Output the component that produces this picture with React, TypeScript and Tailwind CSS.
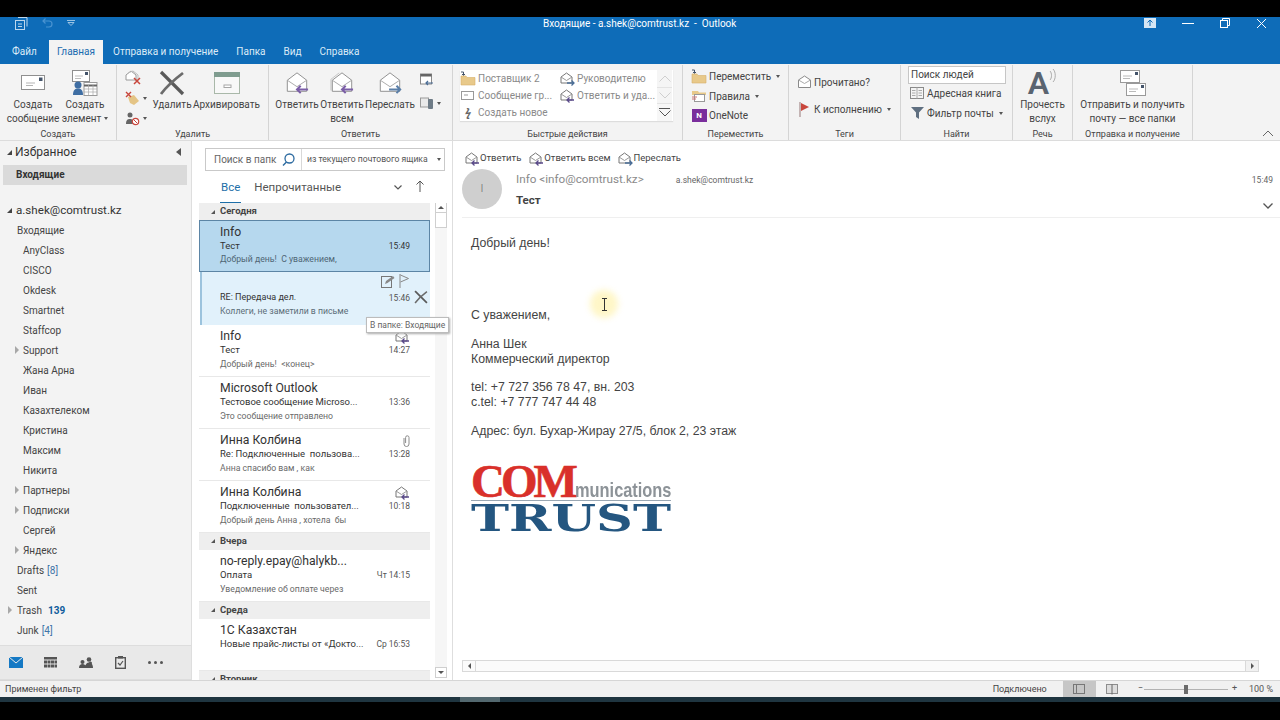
import { ReactNode } from "react";

// ---- small icons ----
function OpenEnv({ arrow, stack, size = 24 }: { arrow?: "left" | "right"; stack?: boolean; size?: number }) {
  const c = arrow === "right" ? "#5b7fa8" : "#7b5ea7";
  return (
    <svg width={size} height={size} viewBox="0 0 26 26" fill="none">
      {stack && <path d="M1 21V9l9-7" stroke="#c4c4c4" />}
      <path d="M2.5 10 13 2l10.5 8v12h-21z" fill="#fff" stroke="#8a8a8a" />
      <path d="M2.5 10 13 17l10.5-7" stroke="#a5a5a5" />
      {arrow === "left" && <path d="M25 20H13m4-4-4 4 4 4" stroke={c} strokeWidth="2.2" />}
      {arrow === "right" && <path d="M12 20h12m-4-4 4 4-4 4" stroke={c} strokeWidth="2.2" />}
    </svg>
  );
}

function SmallReply({ forward }: { forward?: boolean }) {
  return (
    <svg width="15" height="14" viewBox="0 0 15 14" fill="none">
      <path d="M1 5 6.5 1 12 5v6H1z" fill="#fff" stroke="#777" />
      <path d="M1 5l5.5 3.5L12 5" stroke="#999" />
      {forward ? (
        <path d="M7 11h7m-2.5-2.5L14 11l-2.500 2.500" stroke="#4a6d96" strokeWidth="1.300" />
      ) : (
        <path d="M14 11H7m2.500-2.500L7 11l2.500 2.500" stroke="#5a4a8a" strokeWidth="1.300" />
      )}
    </svg>
  );
}

function MailLines({ w = 24, h = 15 }: { w?: number; h?: number }) {
  return (
    <svg width={w} height={h} viewBox="0 0 24 15" fill="none">
      <rect x=".5" y=".5" width="23" height="14" fill="#fff" stroke="#8f8f8f" />
      <rect x="18" y="2.500" width="3.500" height="3.500" fill="#44546a" />
      <path d="M5 8h9M5 10.500h7" stroke="#b5b5b5" />
    </svg>
  );
}

function BigX({ size = 26 }: { size?: number }) {
  return (
    <svg width={size} height={size} viewBox="0 0 26 26" fill="none">
      <path d="M2 2c6 6 14 14 22 22" stroke="#595959" strokeWidth="3.200" />
      <path d="M24 3C16 9 8 16 2 24" stroke="#6b6b6b" strokeWidth="2.800" />
    </svg>
  );
}

function Caret() {
  return <span className="ml-[3px] inline-block align-middle w-0 h-0 border-x-[2px] border-x-transparent border-t-[3px] border-t-[#555]" />;
}

function FolderIco({ arrow = true }: { arrow?: boolean }) {
  return (
    <svg width="16" height="15" viewBox="0 0 16 15" fill="none">
      {arrow && <path d="M1 1h2.500v3M2 3l1.500 1.500L5 3" stroke="#44546a" />}
      <path d="M1 5h5l1 1.500h8V14H1z" fill="#e8c98a" stroke="#d6b06a" strokeWidth=".6" />
    </svg>
  );
}

// ---- ribbon pieces ----
function RibbonGroup({ label, width, children }: { label: string; width: string; children: ReactNode }) {
  return (
    <div className={`${width} shrink-0 flex flex-col border-r border-[#d4d4d4] mt-[1px]`}>
      <div className="flex-1 flex min-h-0">{children}</div>
      <div className="h-[12px] text-center text-[9px] leading-[12px] text-[#444]">{label}</div>
    </div>
  );
}

function BigBtn({ icon, lines, width, caret }: { icon: ReactNode; lines: string[]; width: string; caret?: boolean }) {
  return (
    <div className={`${width} shrink-0 flex flex-col items-center`}>
      <div className="h-[29px] shrink-0 mt-[3px] flex items-center justify-center">{icon}</div>
      <div className="text-center text-[10px] leading-[13.500px] text-[#444] mt-[1px] whitespace-nowrap">
        {lines.map((l, i) => (
          <div key={l}>
            {l}
            {caret && i === lines.length - 1 && <Caret />}
          </div>
        ))}
      </div>
    </div>
  );
}

function RowBtn({ icon, text, caret, h = "h-[19.500px]" }: { icon: ReactNode; text: string; caret?: boolean; h?: string }) {
  return (
    <div className={`${h} flex items-center gap-[2px] text-[10px] text-[#444] whitespace-nowrap`}>
      <span className="w-[16px] flex justify-center">{icon}</span>
      <span>{text}</span>
      {caret && <Caret />}
    </div>
  );
}

function Ribbon() {
  return (
    <div className="h-[77px] shrink-0 bg-[#f3f3f3] border-b border-[#dcdcdc] flex">
      <RibbonGroup label="Создать" width="w-[117px]">
        <div className="flex pl-[7px]">
          <BigBtn
            width="w-[52px]"
            icon={<MailLines />}
            lines={["Создать", "сообщение"]}
          />
          <BigBtn
            width="w-[52px]"
            caret
            icon={
              <svg width="26" height="26" viewBox="0 0 26 26" fill="none">
                <rect x=".5" y=".5" width="17" height="11" fill="#fff" stroke="#8f8f8f" />
                <rect x="13" y="2" width="3" height="3" fill="#44546a" />
                <path d="M3 6h8M3 8.500h6" stroke="#bbb" />
                <circle cx="6" cy="15" r="3.500" fill="#3f6ea3" />
                <path d="M1 25c0-5 2-6.500 5-6.500s5 1.500 5 6.500z" fill="#3f6ea3" />
                <rect x="12" y="12.500" width="13" height="13" fill="#fff" stroke="#9a9a9a" />
                <path d="M12 15.500h13" stroke="#666" strokeWidth="2" />
                <path d="M12 19h13M12 22h13M16.500 15v10M21 15v10" stroke="#aaa" strokeWidth=".7" />
              </svg>
            }
            lines={["Создать", "элемент"]}
          />
        </div>
      </RibbonGroup>

      <RibbonGroup label="Удалить" width="w-[152px]">
        <div className="flex pl-[8px] pt-[3px]">
          <div className="w-[26px] shrink-0 flex flex-col">
            <div className="h-[20px] flex items-center">
              <svg width="16" height="16" viewBox="0 0 16 16" fill="none">
                <path d="M1 5l5-4 5 4v5H1z" fill="#fff" stroke="#999" />
                <path d="M3 3l5-2 5 4v5" stroke="#bbb" />
                <path d="M9 8l6 6m0-6-6 6" stroke="#c8463c" strokeWidth="1.500" />
              </svg>
            </div>
            <div className="h-[20px] flex items-center">
              <svg width="15" height="15" viewBox="0 0 15 15" fill="none">
                <path d="M3 6l6-2 5 6-5 4-4-2z" fill="#e4c485" />
                <path d="M1 1l5 5m0-5-5 5" stroke="#c8463c" strokeWidth="1.400" />
              </svg>
              <Caret />
            </div>
            <div className="h-[20px] flex items-center">
              <svg width="15" height="15" viewBox="0 0 15 15" fill="none">
                <circle cx="5" cy="4" r="2.500" fill="#666" />
                <path d="M1 13c0-4 1.500-5 4-5s3 1 3 5z" fill="#666" />
                <circle cx="10.500" cy="10.500" r="3.200" stroke="#c8463c" strokeWidth="1.200" fill="#fff" />
                <path d="M8.500 8.500l4 4" stroke="#c8463c" />
              </svg>
              <Caret />
            </div>
          </div>
          <div className="-mt-[3px] flex">
            <BigBtn width="w-[42px]" icon={<BigX />} lines={["Удалить"]} />
            <BigBtn
              width="w-[67px]"
              icon={
                <svg width="26" height="22" viewBox="0 0 26 22" fill="none">
                  <rect x=".5" y=".5" width="25" height="21" fill="#f8f8f8" stroke="#a9b8a9" />
                  <rect x="0" y="0" width="26" height="5" fill="#7f9c8f" />
                  <rect x="10" y="13" width="7" height="2.500" fill="#fff" stroke="#a6a6a6" />
                </svg>
              }
              lines={["Архивировать"]}
            />
          </div>
        </div>
      </RibbonGroup>

      <RibbonGroup label="Ответить" width="w-[184px]">
        <div className="flex pl-[5px]">
          <BigBtn width="w-[46px]" icon={<OpenEnv arrow="left" />} lines={["Ответить"]} />
          <BigBtn width="w-[44px]" icon={<OpenEnv arrow="left" stack />} lines={["Ответить", "всем"]} />
          <BigBtn width="w-[52px]" icon={<OpenEnv arrow="right" />} lines={["Переслать"]} />
          <div className="flex flex-col pl-[4px] pt-[8px] gap-[9px]">
            <svg width="14" height="14" viewBox="0 0 14 14" fill="none">
              <rect x=".5" y="1" width="11" height="10" fill="#fff" stroke="#888" />
              <rect x=".5" y="1" width="11" height="2.500" fill="#666" />
              <path d="M13 10H6m2-2-2 2 2 2" stroke="#4a6d96" strokeWidth="1.200" />
            </svg>
            <div className="flex items-center">
              <svg width="14" height="14" viewBox="0 0 14 14" fill="none">
                <rect x=".5" y="2" width="8" height="9" fill="#e9e9e9" stroke="#999" />
                <rect x="8" y="3" width="5" height="10" rx="1" fill="#6e7b86" />
              </svg>
              <Caret />
            </div>
          </div>
        </div>
      </RibbonGroup>

      <RibbonGroup label="Быстрые действия" width="w-[230px]">
        <div className="ml-[7px] mt-[5px] w-[213px] h-[51px] bg-white flex text-[10px] text-[#8a8a8a] shadow-[0_1px_1px_#ddd]">
          <div className="flex-1 grid grid-cols-[100px_1fr] grid-rows-3 items-center whitespace-nowrap">
            <div className="flex items-center gap-[2px]"><FolderIco /><span>Поставщик 2</span></div>
            <div className="flex items-center gap-[2px]"><SmallReply forward /><span>Руководителю</span></div>
            <div className="flex items-center gap-[2px]">
              <svg width="16" height="12" viewBox="0 0 16 12" fill="none"><rect x="1.500" y="1.500" width="12" height="8" fill="#fff" stroke="#999" /><path d="M4 5h4" stroke="#999" /></svg>
              <span>Сообщение гр...</span>
            </div>
            <div className="flex items-center gap-[2px]"><SmallReply /><span>Ответить и уда...</span></div>
            <div className="flex items-center gap-[2px]">
              <span className="w-[16px] text-center text-[11px] leading-none text-[#666] italic font-bold">ϟ</span>
              <span>Создать новое</span>
            </div>
          </div>
          <div className="w-[15px] shrink-0 flex flex-col mr-[1px]">
            <div className="h-[17px] flex items-center justify-center bg-[#f5f5f5]">
              <svg width="12" height="7" viewBox="0 0 12 7" fill="none"><path d="M.500 6.500 6 1l5.500 5.500" stroke="#cfcfcf" /></svg>
            </div>
            <div className="h-[17px] flex items-center justify-center bg-[#f5f5f5] border-y border-[#e3e3e3]">
              <svg width="12" height="7" viewBox="0 0 12 7" fill="none"><path d="M.500.500 6 6 11.500.500" stroke="#cfcfcf" /></svg>
            </div>
            <div className="h-[17px] flex flex-col items-center justify-center bg-[#f7f7f7]">
              <div className="w-[11px] h-px bg-[#555] mb-[1px]" />
              <svg width="12" height="7" viewBox="0 0 12 7" fill="none"><path d="M.500.500 6 6 11.500.500" stroke="#555" /></svg>
            </div>
          </div>
        </div>
      </RibbonGroup>

      <RibbonGroup label="Переместить" width="w-[106px]">
        <div className="pl-[8px] pt-[2px] flex flex-col">
          <RowBtn icon={<FolderIco />} text="Переместить" caret />
          <RowBtn
            icon={
              <svg width="16" height="14" viewBox="0 0 16 14" fill="none">
                <path d="M1 2h6l1 1.500h7V6H1z" fill="#e8c98a" />
                <rect x="3.500" y="5.500" width="10" height="7" fill="#fff" stroke="#999" />
                <path d="M1 8h5M1 10h4" stroke="#c77" />
              </svg>
            }
            text="Правила"
            caret
          />
          <RowBtn
            icon={
              <span className="w-[15px] h-[13px] bg-[#7a2e9c] flex items-center justify-center text-[8px] leading-none font-bold text-white">N</span>
            }
            text="OneNote"
          />
        </div>
      </RibbonGroup>

      <RibbonGroup label="Теги" width="w-[112px]">
        <div className="pl-[7px] pt-[7px] flex flex-col gap-[7px]">
          <RowBtn
            h="h-[20px]"
            icon={
              <svg width="15" height="14" viewBox="0 0 15 14" fill="none">
                <path d="M1.500 5 7.500 1l6 4v7.500h-12z" fill="#fff" stroke="#8a8a8a" />
                <path d="M1.500 5l6 3.500 6-3.500" stroke="#aaa" />
              </svg>
            }
            text="Прочитано?"
          />
          <RowBtn
            h="h-[20px]"
            icon={
              <svg width="12" height="15" viewBox="0 0 12 15" fill="none">
                <path d="M2 0v15" stroke="#a58b8b" strokeWidth="1.200" />
                <path d="M3 1l8 4-8 4z" fill="#c8463c" />
              </svg>
            }
            text="К исполнению"
            caret
          />
        </div>
      </RibbonGroup>

      <RibbonGroup label="Найти" width="w-[112px]">
        <div className="pl-[7px] flex flex-col">
          <div className="w-[98px] h-[18px] mt-[1px] bg-white border border-[#c6c6c6] px-[2px] text-[10px] leading-[16px] text-[#444]">Поиск людей</div>
          <div className="-mt-[1px] flex flex-col pl-[1px]">
            <RowBtn
              h="h-[20px]"
              icon={
                <svg width="14" height="12" viewBox="0 0 14 12" fill="none">
                  <rect x=".500" y=".500" width="13" height="11" fill="#f4f4f4" stroke="#8a8a8a" />
                  <path d="M7 .5v11M2 3.500h3.500M2 6h3.500M2 8.500h3.500M8.500 3.500H12M8.500 6H12M8.500 8.500H12" stroke="#aaa" />
                </svg>
              }
              text="Адресная книга"
            />
            <RowBtn
              h="h-[20px]"
              icon={
                <svg width="13" height="12" viewBox="0 0 13 12" fill="none">
                  <path d="M0 0h13L8 5.500V12L5 10V5.500z" fill="#5f6f80" />
                </svg>
              }
              text="Фильтр почты"
              caret
            />
          </div>
        </div>
      </RibbonGroup>

      <RibbonGroup label="Речь" width="w-[60px]">
        <BigBtn
          width="w-[59px]"
          icon={
            <div className="flex items-start">
              <span className="text-[32px] leading-[28px] text-[#5a6470] font-semibold">A</span>
              <svg width="8" height="16" viewBox="0 0 8 16" fill="none"><path d="M1 2c2 2 2 7 0 9M4 0c3 3 3 10 0 13" stroke="#999" strokeWidth=".8" /></svg>
            </div>
          }
          lines={["Прочесть", "вслух"]}
        />
      </RibbonGroup>

      <RibbonGroup label="Отправка и получение" width="w-[120px]">
        <BigBtn
          width="w-[119px]"
          icon={
            <svg width="26" height="26" viewBox="0 0 26 26" fill="none">
              <rect x=".5" y=".5" width="19" height="12" fill="#fff" stroke="#999" />
              <rect x="15" y="2" width="3" height="3" fill="#44546a" />
              <path d="M3 6h9M3 8.500h7" stroke="#bbb" />
              <rect x="6.500" y="13.500" width="19" height="12" fill="#fff" stroke="#999" />
              <rect x="21" y="15" width="3" height="3" fill="#44546a" />
              <path d="M9 19h9M9 21.500h7" stroke="#bbb" />
            </svg>
          }
          lines={["Отправить и получить", "почту — все папки"]}
        />
      </RibbonGroup>

      <div className="flex-1 flex items-end justify-end pr-[6px] pb-[3px]">
        <svg width="12" height="7" viewBox="0 0 12 7" fill="none"><path d="M1 6l5-5 5 5" stroke="#666" /></svg>
      </div>
    </div>
  );
}

// ---- folder pane ----
type Folder = { name: string; indent: "sub" | "top"; arrow?: boolean; count?: string; unread?: string };

const folders: Folder[] = [
  { name: "Входящие", indent: "top" },
  { name: "AnyClass", indent: "sub" },
  { name: "CISCO", indent: "sub" },
  { name: "Okdesk", indent: "sub" },
  { name: "Smartnet", indent: "sub" },
  { name: "Staffcop", indent: "sub" },
  { name: "Support", indent: "sub", arrow: true },
  { name: "Жана Арна", indent: "sub" },
  { name: "Иван", indent: "sub" },
  { name: "Казахтелеком", indent: "sub" },
  { name: "Кристина", indent: "sub" },
  { name: "Максим", indent: "sub" },
  { name: "Никита", indent: "sub" },
  { name: "Партнеры", indent: "sub", arrow: true },
  { name: "Подписки", indent: "sub", arrow: true },
  { name: "Сергей", indent: "sub" },
  { name: "Яндекс", indent: "sub", arrow: true },
  { name: "Drafts", indent: "top", count: "[8]" },
  { name: "Sent", indent: "top" },
  { name: "Trash", indent: "top", arrow: true, unread: "139" },
  { name: "Junk", indent: "top", count: "[4]" },
];

function FolderRow({ f }: { f: Folder }) {
  return (
    <div className={`h-[20px] flex items-center text-[10px] text-[#444] relative ${f.indent === "sub" ? "pl-[23px]" : "pl-[17px]"}`}>
      {f.arrow && (
        <span
          className={`absolute top-[6px] w-0 h-0 border-y-[4px] border-y-transparent border-l-[4px] border-l-[#a8a8a8] ${f.indent === "sub" ? "left-[15px]" : "left-[8px]"}`}
        />
      )}
      <span>{f.name}</span>
      {f.count && <span className="ml-[3px] text-[#3f74a8]">{f.count}</span>}
      {f.unread && <span className="ml-[6px] font-bold text-[#0f5c9c]">{f.unread}</span>}
    </div>
  );
}

function FolderPane() {
  return (
    <div className="w-[192px] shrink-0 bg-[#f3f3f3] border-r border-[#dedede] flex flex-col">
      <div className="h-[22px] flex items-center pl-[7px] pr-[9px] text-[12px] text-[#333]">
        <span className="w-0 h-0 border-t-[5px] border-t-transparent border-r-[5px] border-r-[#444] mr-[3px]" />
        <span>Избранное</span>
        <svg className="ml-auto" width="6" height="8" viewBox="0 0 6 8"><path d="M5 0v8L0 4z" fill="#555" /></svg>
      </div>
      <div className="mt-[2px] ml-[3px] mr-[4px] h-[20px] bg-[#dadada] pl-[13px] pb-[1px] flex items-center text-[10px] font-bold text-[#333]">Входящие</div>
      <div className="mt-[16px] h-[19px] flex items-center pl-[7px] text-[11.600px] text-[#333]">
        <span className="w-0 h-0 border-t-[5px] border-t-transparent border-r-[5px] border-r-[#444] mr-[4px]" />
        <span>a.shek@comtrust.kz</span>
      </div>
      <div className="flex-1 min-h-0">
        {folders.map((f) => (
          <FolderRow key={f.name} f={f} />
        ))}
      </div>
      <div className="h-[35px] shrink-0 bg-[#e9e9e9] border-y border-[#dddddd] flex items-center pl-[6px] gap-[16px]">
        <span className="w-[19px] flex justify-center">
          <svg width="14" height="11" viewBox="0 0 14 11"><rect width="14" height="11" fill="#1579c4" /><path d="M0 0l7 6 7-6" stroke="#e9e9e9" fill="none" /></svg>
        </span>
        <span className="w-[19px] flex justify-center">
          <svg width="13" height="11" viewBox="0 0 13 11" fill="#555"><rect width="13" height="2.500" /><path d="M0 3.500h3v3H0zM3.500 3.500h3v3h-3zM7 3.500h3v3H7zM10.500 3.500h2.500v3h-2.500zM0 7.500h3v3H0zM3.500 7.500h3v3h-3zM7 7.500h3v3H7zM10.500 7.500h2.500v3h-2.500z" /></svg>
        </span>
        <span className="w-[19px] flex justify-center">
          <svg width="14" height="11" viewBox="0 0 14 11" fill="#555"><circle cx="3.500" cy="5" r="2" /><circle cx="10" cy="2.500" r="2.300" /><circle cx="11.500" cy="6" r="1.500" /><path d="M0 11c0-3 1.500-4 3.500-4S7 8 7 11zM6 11c.3-4 2-5.500 4-5.500s4 1.500 4 5.500z" /></svg>
        </span>
        <span className="w-[19px] flex justify-center">
          <svg width="11" height="13" viewBox="0 0 11 13" fill="none"><rect x=".700" y="1.700" width="9.600" height="10.600" stroke="#555" strokeWidth="1.400" /><rect x="3" y="0" width="5" height="2.500" fill="#555" /><path d="M3 7l2 2 3-4" stroke="#555" strokeWidth="1.200" /></svg>
        </span>
        <span className="w-[19px] flex justify-center gap-[3px]">
          <i className="w-[3px] h-[3px] rounded-full bg-[#555]" />
          <i className="w-[3px] h-[3px] rounded-full bg-[#555]" />
          <i className="w-[3px] h-[3px] rounded-full bg-[#555]" />
        </span>
      </div>
    </div>
  );
}

// ---- message list ----
function GroupHead({ title }: { title: string }) {
  return (
    <div className="h-[17px] bg-[#eeeeee] flex items-center pl-[12px] text-[9.500px] font-bold text-[#444]">
      <span className="w-0 h-0 border-t-[4px] border-t-transparent border-r-[4px] border-r-[#555] mr-[5px]" />
      {title}
    </div>
  );
}

function Msg({
  sender,
  subject,
  preview,
  time,
  icon,
}: {
  sender: ReactNode;
  subject: string;
  preview?: string;
  time: string;
  icon?: ReactNode;
}) {
  return (
    <div className="h-[52px] border-b border-[#e8e8e8] pl-[21px] pr-[20px] pt-[4px] flex flex-col">
      <div className="h-[16px] flex items-center justify-between text-[12.200px] text-[#333] whitespace-nowrap">
        {sender}
        {icon}
      </div>
      <div className="h-[14px] mt-[-1px] flex items-center justify-between text-[9.500px] text-[#333] whitespace-pre">
        <span>{subject}</span>
        <span className="text-[8.500px] text-[#555]">{time}</span>
      </div>
      <div className="h-[13px] text-[8.700px] leading-[13px] text-[#6a6a6a] whitespace-pre">{preview}</div>
    </div>
  );
}

function MessageList() {
  return (
    <div className="w-[261px] shrink-0 bg-white border-r border-[#dedede] flex flex-col min-h-0">
      <div className="mt-[7px] ml-[13px] w-[240px] h-[23px] border border-[#c9c9c9] flex items-center text-[10px] text-[#666] shrink-0">
        <div className="w-[96px] shrink-0 border-r border-[#d8d8d8] h-full flex items-center pl-[8px] justify-between pr-[6px]">
          <span className="whitespace-nowrap">Поиск в папк</span>
          <svg width="13" height="13" viewBox="0 0 13 13" fill="none"><circle cx="7.500" cy="5.500" r="4.500" stroke="#2c6aa0" strokeWidth="1.300" /><path d="M4.500 9 1 12.500" stroke="#2c6aa0" strokeWidth="1.400" /></svg>
        </div>
        <span className="pl-[5px] text-[8.600px] text-[#555] whitespace-nowrap mr-[6px]">из текущего почтового ящика</span>
        <Caret />
      </div>
      <div className="h-[24px] mt-[8px] shrink-0 ml-[28px] mr-[28px] flex items-start text-[11.500px] text-[#555]">
        <span className="text-[#1e6fa8] border-b border-[#1e6fa8] pb-[6px] px-[1px] leading-[17px]">Все</span>
        <span className="ml-[13px] leading-[17px]">Непрочитанные</span>
        <svg className="ml-auto mt-[6px]" width="8" height="5" viewBox="0 0 8 5" fill="none"><path d="M.500.500 4 4 7.500.500" stroke="#555" strokeWidth="1.200" /></svg>
        <svg className="ml-[14px] mt-[1px]" width="8" height="12" viewBox="0 0 8 12" fill="none"><path d="M4 12V1M.500 4.500 4 1l3.500 3.500" stroke="#555" /></svg>
      </div>
      <div className="flex-1 min-h-0 flex pl-[7px] pr-[3px] overflow-hidden relative">
        <div className="w-[231px] shrink-0">
          <GroupHead title="Сегодня" />
          <div className="h-[52px] bg-[#b6d8ee] border border-[#5c85a5] pl-[20px] pr-[19px] pt-[3px] flex flex-col">
            <div className="h-[16px] text-[12.200px] leading-[16px] text-[#333]">Info</div>
            <div className="h-[14px] mt-[-1px] flex items-center justify-between text-[9.500px] text-[#333]">
              <span>Тест</span>
              <span className="text-[8.500px]">15:49</span>
            </div>
            <div className="h-[13px] text-[8.700px] leading-[13px] text-[#4f6675]">Добрый день!&nbsp; С уважением,</div>
          </div>
          <div className="h-[52.500px] bg-[#e1f1fb] border-l-[2px] border-l-[#9cc3dd] ml-[1px] pl-[18px] pr-[20px] pt-[4px] flex flex-col relative">
            <div className="h-[16px] -mt-[3px] mb-[3px] flex items-center justify-end gap-[4px]">
              <svg width="14" height="14" viewBox="0 0 14 14" fill="none"><rect x=".500" y="2.500" width="10" height="11" stroke="#777" /><path d="M4 10l1-3 7-5 1.500 2-7 5z" fill="#888" /></svg>
              <svg width="11" height="14" viewBox="0 0 11 14" fill="none"><path d="M1 0v14" stroke="#888" /><path d="M1.500 1l8 3.500-8 3.500" stroke="#888" /></svg>
            </div>
            <div className="h-[14px] mt-[-1px] flex items-center justify-between text-[9px] text-[#333]">
              <span>RE: Передача дел.</span>
              <span className="text-[8.500px] text-[#555]">15:46</span>
            </div>
            <div className="h-[13px] mt-[-0.500px] text-[8.700px] leading-[13px] text-[#5c6d78]">Коллеги, не заметили в письме</div>
            <div className="absolute right-[2px] top-[18px]"><BigX size={14} /></div>
          </div>
          <Msg
            sender="Info"
            subject="Тест"
            preview="Добрый день!  <конец>"
            time="14:27"
            icon={
              <span className="mt-[1px]"><SmallReply forward={false} /></span>
            }
          />
          <Msg sender="Microsoft Outlook" subject="Тестовое сообщение Microso..." preview="Это сообщение отправлено" time="13:36" />
          <Msg
            sender="Инна Колбина"
            subject="Re: Подключенные  пользова..."
            preview="Анна спасибо вам , как"
            time="13:28"
            icon={
              <svg width="7" height="12" viewBox="0 0 7 12" fill="none"><path d="M1 3v6a2.500 2.500 0 0 0 5 0V2.500a1.700 1.700 0 0 0-3.400 0V8" stroke="#8c8c8c" /></svg>
            }
          />
          <Msg
            sender="Инна Колбина"
            subject="Подключенные  пользовател..."
            preview="Добрый день Анна , хотела  бы"
            time="10:18"
            icon={<SmallReply />}
          />
          <GroupHead title="Вчера" />
          <Msg sender="no-reply.epay@halykb..." subject="Оплата" preview="Уведомление об оплате через" time="Чт 14:15" />
          <GroupHead title="Среда" />
          <Msg sender="1С Казахстан" subject="Новые прайс-листы от «Докто..." time="Ср 16:53" />
          <GroupHead title="Вторник" />
        </div>
        <div className="ml-[5px] w-[12px] shrink-0 flex flex-col items-stretch bg-[#f6f6f6] mb-[2px] mt-[-1px]">
          <div className="h-[11px] border border-[#cfcfcf] bg-white flex items-center justify-center">
            <span className="w-0 h-0 border-x-[3px] border-x-transparent border-b-[3px] border-b-[#555]" />
          </div>
          <div className="h-[15px] border-x border-b border-[#cfcfcf] bg-white" />
          <div className="flex-1" />
          <div className="h-[11px] border border-[#cfcfcf] bg-white flex items-center justify-center">
            <span className="w-0 h-0 border-x-[3px] border-x-transparent border-t-[3px] border-t-[#555]" />
          </div>
        </div>
      </div>
    </div>
  );
}

// ---- reading pane ----
const bodyLines = [
  "Добрый день!",
  "",
  "",
  "",
  "",
  "С уважением,",
  "",
  "Анна Шек",
  "Коммерческий директор",
  "",
  "tel: +7 727 356 78 47, вн. 203",
  "c.tel: +7 777 747 44 48",
  "",
  "Адрес: бул. Бухар-Жирау 27/5, блок 2, 23 этаж",
];

function Logo() {
  return (
    <div className="w-[200px] mt-[26px]">
      <div className="h-[37px] flex items-end border-b border-[#9aa7b3]">
        <span className="font-['Liberation_Serif',serif] font-bold text-[47px] leading-[37px] tracking-[-4px] text-[#d9302a] [-webkit-text-stroke:0.6px_#d9302a]">COM</span>
        <span className="ml-[1px] font-['Liberation_Sans',sans-serif] font-bold text-[21px] leading-[20px] text-[#8d9398] origin-left scale-x-[0.78] whitespace-nowrap">munications</span>
      </div>
      <div className="h-[32px] pt-[2px] font-['DejaVu_Serif',serif] font-bold text-[38px] leading-[30px] text-[#245680] origin-left scale-x-[1.345] whitespace-nowrap">TRUST</div>
    </div>
  );
}

function ReadingPane() {
  return (
    <div className="flex-1 min-w-0 bg-white flex flex-col">
      <div className="h-[17px] mt-[9px] pl-[12px] flex items-center text-[9.500px] text-[#444] shrink-0">
        <span className="flex items-center"><SmallReply />Ответить</span>
        <span className="flex items-center ml-[8px]"><SmallReply />Ответить всем</span>
        <span className="flex items-center ml-[8px]"><SmallReply forward />Переслать</span>
      </div>
      <div className="h-[49px] ml-[9px] mt-[2px] border-b border-[#efefef] flex relative shrink-0">
        <div className="w-[40px] h-[40px] rounded-full bg-[#cfcfcf] text-[#666] flex items-center justify-center text-[11px] font-light shrink-0">I</div>
        <div className="ml-[14px] flex-1 min-w-0 pr-[7px]">
          <div className="h-[17px] mt-[2px] flex items-center text-[11.700px] text-[#8a8a8a]">
            <span className="whitespace-nowrap">Info &lt;info@comtrust.kz&gt;</span>
            <span className="ml-[32px] mt-[1px] text-[8.500px] text-[#666]">a.shek@comtrust.kz</span>
            <span className="ml-auto mt-[1px] text-[8.500px] text-[#666]">15:49</span>
          </div>
          <div className="mt-[4px] flex items-center justify-between text-[11.500px] font-bold text-[#444]">
            <span>Тест</span>
            <svg className="mt-[10px]" width="10" height="6" viewBox="0 0 10 6" fill="none"><path d="M.500.500 5 5 9.500.500" stroke="#555" strokeWidth="1.300" /></svg>
          </div>
        </div>
      </div>
      <div className="flex-1 min-h-0 pl-[18px] pt-[18px] font-['Liberation_Sans',sans-serif] text-[12.300px] leading-[14.400px] text-[#444]">
        {bodyLines.map((l, i) => (
          <div key={i} className="h-[14.450px] whitespace-nowrap">{l}</div>
        ))}
        <Logo />
      </div>
      <div className="h-[12px] mb-[8px] ml-[9px] mr-[21px] bg-[#fbfbfb] border border-[#d9d9d9] flex items-center justify-between shrink-0">
        <span className="w-[13px] h-full border-r border-[#d9d9d9] flex items-center justify-center">
          <span className="w-0 h-0 border-y-[3px] border-y-transparent border-r-[3px] border-r-[#555]" />
        </span>
        <span className="w-[13px] h-full border-l border-[#d9d9d9] bg-[#f1f1f1] flex items-center justify-center">
          <span className="w-0 h-0 border-y-[3px] border-y-transparent border-l-[3px] border-l-[#555]" />
        </span>
      </div>
    </div>
  );
}

function StatusBar() {
  return (
    <div className="h-[17px] shrink-0 bg-[#f1f1f1] border-t border-[#d6d6d6] flex items-center text-[9px] text-[#444]">
      <span className="pl-[5px] pt-[1px]">Применен фильтр</span>
      <span className="ml-auto pt-[1px]">Подключено</span>
      <div className="ml-[16px] w-[33px] h-full bg-[#c6c6c6] flex items-center justify-center">
        <span className="w-[12px] h-[10px] border border-[#777] flex"><i className="w-[3px] border-r border-[#777]" /></span>
      </div>
      <span className="w-[33px] flex justify-center">
        <svg width="12" height="11" viewBox="0 0 12 11" fill="none"><rect x=".5" y=".5" width="11" height="9" fill="#ddd" stroke="#8d8d8d" /><path d="M6 .5v10" stroke="#666" /></svg>
      </span>
      <span className="ml-[9px] text-[#555]">−</span>
      <div className="ml-[1px] w-[84px] h-px bg-[#b3b3b3] relative">
        <span className="absolute left-[40px] -top-[4px] w-[4px] h-[9px] bg-[#6b6b6b]" />
      </div>
      <span className="ml-[4px] text-[#555]">+</span>
      <span className="w-[43px] text-right pr-[7px] pt-[1px] text-[#555]">100 %</span>
    </div>
  );
}

export default function App() {
  return (
    <div className="relative w-[1280px] h-[720px] bg-black overflow-hidden flex flex-col font-['Roboto','Noto_Sans',sans-serif]">
      <div className="h-[17px] shrink-0 bg-black" />
      {/* title bar */}
      <div className="h-[23px] shrink-0 bg-[#0e6cb8] flex items-center pb-[11px] text-white text-[10px] relative">
        <div className="w-[110px] flex items-center pl-[15px] gap-[14px] opacity-90">
          <svg width="13" height="13" viewBox="0 0 13 13" fill="none"><rect x=".5" y="3.500" width="9" height="9" stroke="#cfe3f3" /><path d="M3 .5h9v9M3 7h4M3 9.500h4" stroke="#cfe3f3" /></svg>
          <svg width="11" height="10" viewBox="0 0 11 10" fill="none"><path d="M1 3h6a3 3 0 0 1 0 6H4M3.500.500 1 3l2.500 2.500" stroke="#4f97d3" strokeWidth="1.200" /></svg>
          <svg width="8" height="6" viewBox="0 0 8 6" fill="none"><path d="M0 .5h8M1 2.500h6L4 5.500z" stroke="#cfe3f3" strokeWidth=".8" /></svg>
        </div>
        <div className="absolute left-[543px] whitespace-nowrap">Входящие - a.shek@comtrust.kz&nbsp; -&nbsp; Outlook</div>
        <div className="ml-auto flex items-center pr-[13px] gap-[26px]">
          <svg width="12" height="10" viewBox="0 0 12 10"><rect width="12" height="10" fill="#d5e6f4" /><path d="M6 2v6M3.500 4.500 6 2l2.500 2.500" stroke="#0e6cb8" fill="none" /></svg>
          <span className="w-[12px] h-px bg-white" />
          <svg width="10" height="10" viewBox="0 0 10 10" fill="none"><rect x=".5" y="2.500" width="7" height="7" stroke="#fff" /><path d="M2.500 2.500v-2h7v7h-2" stroke="#fff" /></svg>
          <svg width="11" height="11" viewBox="0 0 11 11" fill="none"><path d="M1 1l9 9m0-9-9 9" stroke="#fff" /></svg>
        </div>
      </div>
      {/* tabs */}
      <div className="h-[24px] shrink-0 bg-[#0e6cb8] flex items-stretch text-[10px] text-[#dcebf7]">
        <span className="pl-[12px] pb-[1px] w-[49px] flex items-center">Файл</span>
        <span className="w-[54px] pb-[1px] bg-[#f3f3f3] text-[#1b6bb0] flex items-center justify-center">Главная</span>
        <span className="ml-[10px] pb-[1px] flex items-center">Отправка и получение</span>
        <span className="ml-[18px] pb-[1px] flex items-center">Папка</span>
        <span className="ml-[18px] pb-[1px] flex items-center">Вид</span>
        <span className="ml-[18px] pb-[1px] flex items-center">Справка</span>
      </div>
      <Ribbon />
      <div className="flex-1 min-h-0 flex bg-white">
        <FolderPane />
        <MessageList />
        <ReadingPane />
      </div>
      <StatusBar />
      <div className="h-[5px] shrink-0 bg-[#1f3540] pl-[460px]">
        <div className="w-[40px] h-full bg-[#53686f]" />
      </div>
      <div className="h-[18px] shrink-0 bg-black" />

      {/* tooltip + text cursor over the content */}
      <div className="absolute left-[366px] top-[317px] h-[16px] px-[3px] bg-white border border-[#bcbcbc] shadow-[1px_1px_2px_#aaa] text-[8.500px] leading-[14px] text-[#666] whitespace-nowrap">В папке: Входящие</div>
      <div className="absolute left-[590px] top-[290px] w-[28px] h-[28px] rounded-full bg-[#fff3b0] opacity-70 blur-[3px]" />
      <svg className="absolute left-[601px] top-[298px]" width="7" height="13" viewBox="0 0 7 13" fill="none"><path d="M1 .5h5M1 12.500h5M3.500.5v12" stroke="#333" /></svg>
    </div>
  );
}
